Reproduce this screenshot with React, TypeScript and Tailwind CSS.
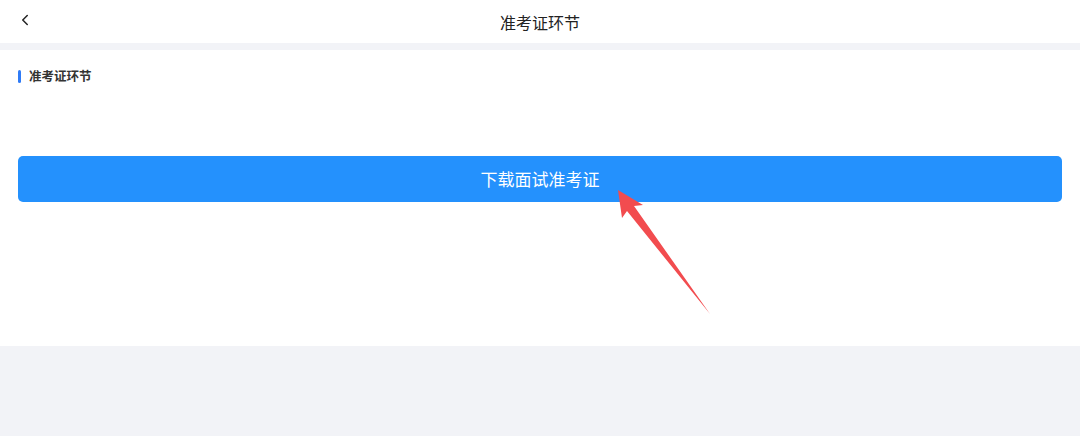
import { ChevronLeft } from 'lucide-react'

const font = { fontFamily: '"Noto Sans CJK SC", "Noto Sans", sans-serif' }

export default function App() {
  return (
    <div className="min-h-[436px] bg-[#f2f3f7] flex flex-col" style={font}>
      <header className="relative h-[43px] bg-white flex items-center justify-center">
        <button className="absolute left-[16px] top-[11px] text-[#222]">
          <ChevronLeft size={18} strokeWidth={2} />
        </button>
        <h1 className="text-[16px] text-[#222] leading-none">准考证环节</h1>
      </header>

      <main className="relative mt-[7px] h-[296px] bg-white px-[18px] pt-[19px]">
        <div className="flex items-center gap-[8px] h-[14px]">
          <span className="w-[3px] h-[13px] rounded-full bg-[#2f7bf6]" />
          <span className="text-[12.5px] font-bold text-[#333] leading-none">准考证环节</span>
        </div>

        <button className="mt-[73px] w-full h-[46px] rounded-[5px] bg-[#2491fd] text-white text-[17px] flex items-center justify-center">
          下载面试准考证
        </button>

        {/* annotation arrow */}
        <svg
          className="absolute left-0 top-0 pointer-events-none"
          width="1080"
          height="296"
          viewBox="0 50 1080 296"
        >
          <polygon
            points="618,190 643,205 634,206 710,314 627,211 622,218"
            fill="#f24c4f"
          />
        </svg>
      </main>
    </div>
  )
}
